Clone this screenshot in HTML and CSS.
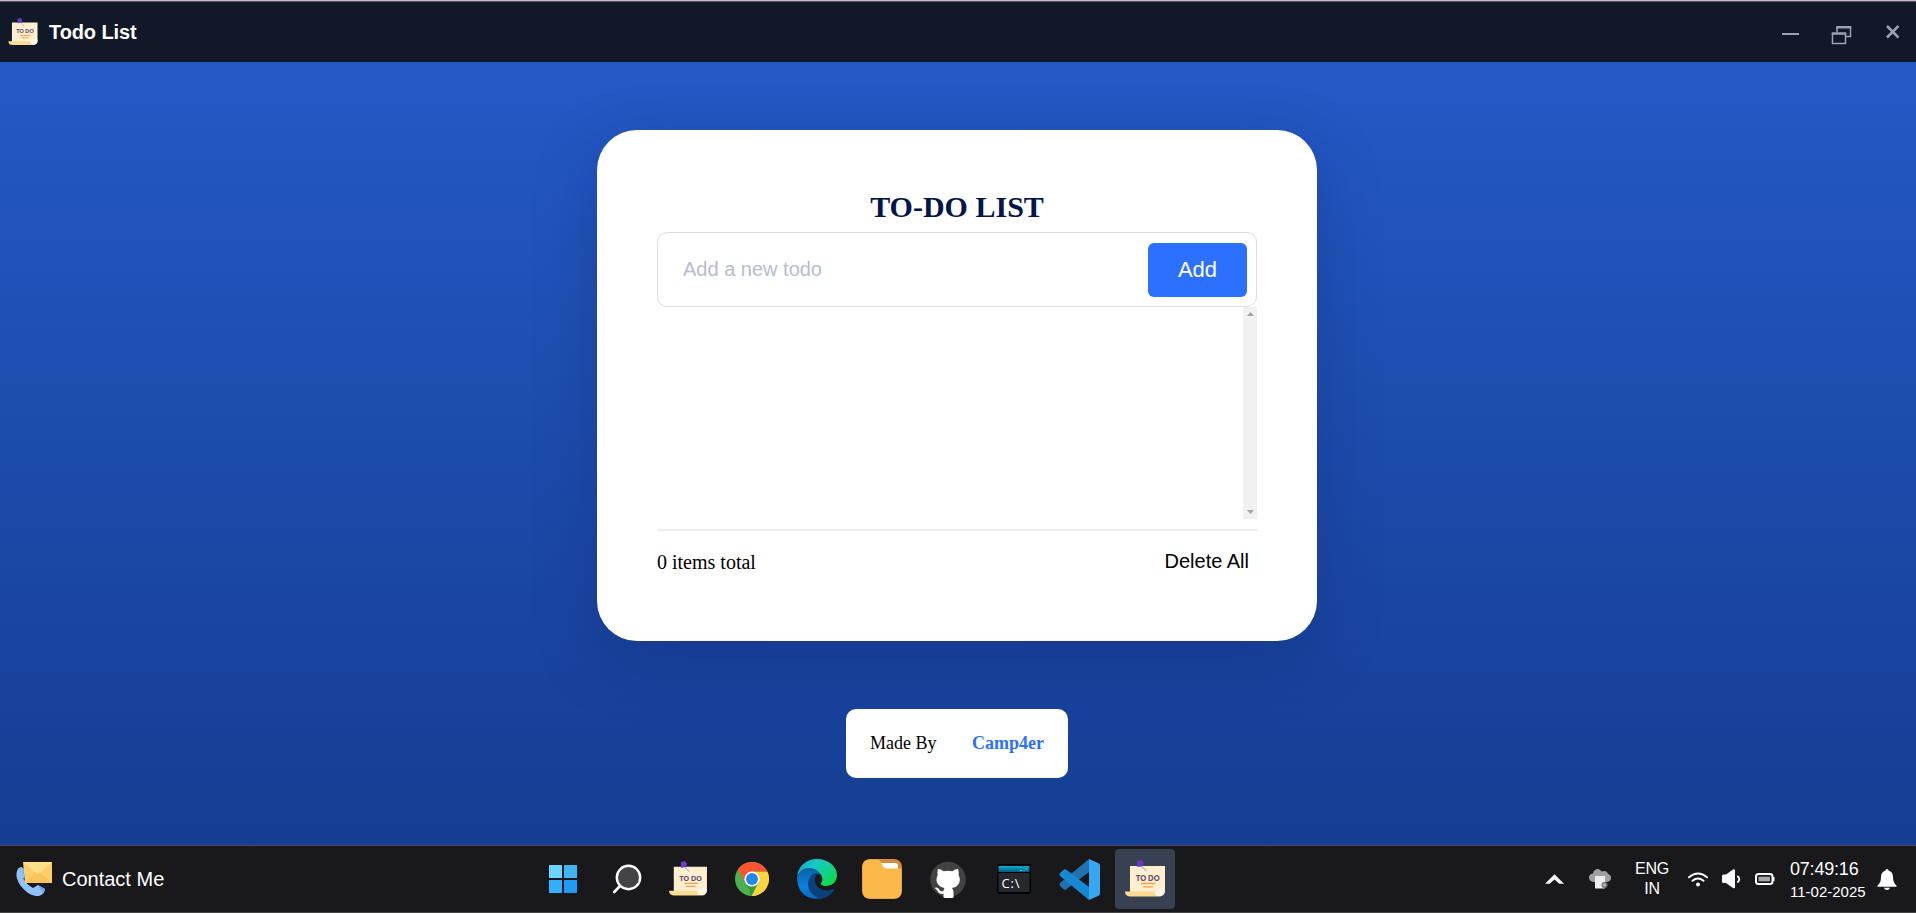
FILE: index.html
```html
<!DOCTYPE html>
<html lang="en">
<head>
<meta charset="utf-8">
<title>Todo List</title>
<link rel="stylesheet" href="styles.css">
</head>
<body>
<svg class="defs" width="0" height="0">
  <symbol id="note" viewBox="0 0 40 38">
    <path d="M5 6h35v24a6 6 0 0 1-5 6H5z" fill="#ffefcf"/>
    <path d="M0 31.500h30q0 5 5 5H6q-6 0-6-5z" fill="#fbdc94"/>
    <path d="M30 31.500q0 5 5 5 5-1 5-6-1-3-5-2.500-2 3-5 3.500z" fill="#fff6e3"/>
    <path d="M17 7l4.500 4" stroke="#c4b5d6" stroke-width="1.300"/>
    <path d="M12.500 1l4.500-1 2 3-1.500 3.500-5 .5z" fill="#6b3acb"/>
    <text x="22.800" y="20.800" text-anchor="middle" class="note-text" textLength="24">TO DO</text>
    <path d="M16 23.500h14.500M18 26.800h10" stroke="#fb9e47" stroke-width="1.300"/>
  </symbol>
</svg>
<div class="window">
  <header class="titlebar">
    <svg class="title-icon" viewBox="0 0 40 38"><use href="#note"/></svg>
    <h1 class="title">Todo List</h1>
    <svg class="controls" width="118" height="20" viewBox="0 0 118 20" fill="none" stroke="#9ca3af">
      <path d="M1 9h17" stroke-width="2"/>
      <path d="M56 7V2M69.500 2v9.500H65M51.500 8v10.500h13V8" stroke-width="1.500"/>
      <path d="M55.300 2.300h15M50.800 8.500h14.500" stroke-width="2.600"/>
      <path d="M106 1l11.500 11.500M117.500 1L106 12.500" stroke-width="2.600"/>
    </svg>
  </header>

  <main class="stage">
    <section class="card">
      <h2 class="heading">TO-DO LIST</h2>
      <div class="field">
        <span class="placeholder">Add a new todo</span>
        <button class="add">Add</button>
      </div>
      <div class="list">
        <div class="scrollbar">
          <svg width="7" height="4" viewBox="0 0 7 4"><path d="M0 4L3.500 0 7 4z" fill="#a3a3a3"/></svg>
          <svg width="7" height="4" viewBox="0 0 7 4"><path d="M0 0h7L3.500 4z" fill="#a3a3a3"/></svg>
        </div>
      </div>
      <div class="rule"></div>
      <div class="summary"><span>0 items total</span><button class="clear">Delete All</button></div>
    </section>
    <div class="credit"><span>Made By</span><a class="author">Camp4er</a></div>
  </main>

  <footer class="taskbar">
    <div class="contact">
      <svg width="36" height="34" viewBox="0 0 36 34">
        <path d="M1 9q1-4 5-4l4 7-3 4q3 6 10 10l5-3 7 4q0 5-6 7Q13 35 4 23-1 15 1 9z" fill="#8fc1fb"/>
        <path d="M7 5l3 7-3 4M22 23l7 4-2 4" fill="#69a7f2"/>
        <path d="M7 0h29v21H9z" fill="#ffcf67"/>
        <path d="M7 0h29L21.500 13z" fill="#ffe08a"/>
        <path d="M9 21l10-11 2.500 2L24 10l12 11z" fill="#fac45c"/>
        <path d="M7 12l3 1-3 4z" fill="#8fc1fb"/>
      </svg>
      <span>Contact Me</span>
    </div>

    <nav class="apps">
      <svg class="app win" viewBox="0 0 30 30"><path d="M1 1h13v13H1z" fill="#6bd5ff"/><path d="M16 1h13v13H16z" fill="#42b4f2"/><path d="M1 16h13v13H1z" fill="#2fb0fb"/><path d="M16 16h13v13H16z" fill="#1d9bf6"/></svg>
      <svg class="app search" viewBox="0 0 30 30"><path d="M8.500 21.500L2.200 28" stroke="#fff" stroke-width="2.600" stroke-linecap="round"/><circle cx="16.500" cy="13.500" r="11.700" fill="#444447" stroke="#fff" stroke-width="2.400"/></svg>
      <svg class="app note" viewBox="0 0 40 38"><use href="#note"/></svg>
      <svg class="app chrome" viewBox="0 0 34 34">
        <circle cx="17" cy="17" r="17" fill="#4caf50"/>
        <path d="M17 9.500h15.300A17 17 0 0 1 16.500 34l7-13z" fill="#ffd43d"/>
        <path d="M3 7.400A17 17 0 0 1 32.300 9.500H17L10 20z" fill="#fb5430"/>
        <path d="M10 22q5 5 12-.5L16.500 34q-2-1-1.500-6z" fill="#349c3b"/>
        <circle cx="17" cy="17" r="7.600" fill="#fff"/><circle cx="17" cy="17" r="6" fill="#2188ea"/>
      </svg>
      <svg class="app edge" viewBox="0 0 40 40">
        <defs>
          <linearGradient id="ea" x1="0" y1="0" x2="1" y2=".7"><stop offset="0" stop-color="#12a3df"/><stop offset=".4" stop-color="#17c9c4"/><stop offset="1" stop-color="#0fd94f"/></linearGradient>
          <linearGradient id="eb" x1=".4" y1="0" x2=".4" y2="1"><stop offset="0" stop-color="#0b5fa5"/><stop offset=".6" stop-color="#0c80dc"/><stop offset="1" stop-color="#0c62b8"/></linearGradient>
        </defs>
        <path d="M0 17C2 6 10 0 20 0c12 0 20 8 20 16 0 7-5 11-11 11-4 0-6-2-5-3 3-3 1-9-4-10C12 9 3 11 0 17z" fill="url(#ea)"/>
        <path d="M0 18c2-6 6-9 12-9 7 0 12 4 13 10-3-5-9-4-11 2-2 7 3 16 12 18-4 1-7 1-10 .5C6 38 0 30 0 18z" fill="url(#eb)"/>
        <path d="M19 14c-5 2-8 6-8 11 0 7 5 12 12 14.800C30 39 35 35 37 31c.3-1-.4-1.300-1-1-7 3-14 1-17-5-1-3-1.500-5 0-8 1-2 1-3 0-3z" fill="#0a417d"/>
        <path d="M20 15q4-1 5 4 0 3-1.500 5.500-.5 2 2 3.500l-1 2q-4-1-6-6-1.500-5 1.500-9z" fill="#19191b"/>
      </svg>
      <svg class="app folder" viewBox="0 0 40 40"><rect width="40" height="40" rx="8" fill="#d68a3c"/><path d="M19 4h14q3 0 3 3v5H22z" fill="#fff"/><path d="M8 .5h8q2 0 3 3l2 4q1 2 4 2h14.500V32q0 7.500-8 7.500H8Q.5 39.500.5 32V8Q.5.500 8 .5z" fill="#fbb84b"/></svg>
      <svg class="app github" viewBox="0 0 36 37"><circle cx="18" cy="18.500" r="17.800" fill="#424242"/><path d="M8 8q3 0 5.500 2.200 4.500-1 9 0Q25 8 28 8q1.200 3 .5 6 2 3 1 7-1.500 5-7.500 6 1.500 2 1.500 4v5.500q-5.500 2-10 0V33Q9 33.500 7.500 30q-1-2-3-3 3-1.500 5 2 1.500 2 4 1 0-2 1-3-6-1-7.700-6-1-4 1-7Q7 11 8 8z" fill="#fff"/></svg>
      <svg class="app cmd" viewBox="0 0 34 30"><defs><linearGradient id="cb" x1="0" y1="0" x2="0" y2="1"><stop offset="0" stop-color="#06b0d8"/><stop offset="1" stop-color="#07597c"/></linearGradient></defs><rect width="34" height="30" rx="2" fill="#020304"/><path d="M1.500 2h31v6h-31z" fill="url(#cb)"/><path d="M1.500 9h31v19h-31z" fill="#25292d"/><path d="M23 6.500h2m1.500 0h1m1-2l2 1.500" stroke="#6bbfd4"/><text x="4.500" y="24" class="cmd-text" textLength="18">C:\</text></svg>
      <svg class="app code" viewBox="0 0 41 41"><path d="M1 27l4 3.500q1 .6 2 0L30 13V0L1 24q-1 1.500 0 3z" fill="#2272af"/><path d="M1 14l4-3.500q1-.5 2 0L30 28v13L1 17q-1-1.500 0-3z" fill="#1689d4"/><path d="M30 0l10 4.500q1 .5 1 2v28q0 1.500-1 2L30 41z" fill="#37a6f3"/></svg>
      <div class="active"><svg class="active-note" viewBox="0 0 40 38"><use href="#note"/></svg></div>
    </nav>

    <div class="tray">
      <svg class="up" viewBox="0 0 20 10"><path d="M0 10L10 0l10 10h-5l-5-4.500L5 10z" fill="#f4f4f4"/></svg>
      <svg class="cloud" viewBox="0 0 22 20"><path d="M4 13Q0 12 0 8.500 0 5 4 4.500 5 0 9 0q2 0 3.500 2.500Q18 1 19 5q3 .5 3 4t-4 4z" fill="#a0a0a3"/><path d="M6 7h10v12.500H6z" fill="#ededed"/><circle cx="15.500" cy="16" r="2.200" fill="#bbb" stroke="#77777a" stroke-width="1.600"/></svg>
      <div class="lang"><span>ENG</span><span>IN</span></div>
      <svg class="wifi" viewBox="0 0 20 15"><g fill="none" stroke="#fff" stroke-width="1.900" stroke-linecap="round"><path d="M1 5.300q9-7.500 18 0M4.500 8.800q5.500-4.500 11 0"/></g><circle cx="10" cy="12.500" r="1.900" fill="#fff"/></svg>
      <svg class="sound" viewBox="0 0 19 20"><path d="M0 7q0-1.500 1.500-1.500H4L11 .5q1.500-.8 2 .5v17.500q-.5 1.300-2 .5l-7-5H1.500Q0 14 0 12.500z" fill="#fff"/><path d="M15.300 7q4 3 0 6.500" fill="none" stroke="#fff" stroke-width="1.900"/></svg>
      <svg class="battery" viewBox="0 0 20 12"><rect x="1" y="1" width="16.500" height="10" rx="2.500" fill="none" stroke="#fff" stroke-width="2"/><rect x="3.500" y="3.700" width="11.500" height="4.600" fill="#a5a5a7"/><path d="M18.700 4v4" stroke="#fff" stroke-width="1.600"/></svg>
      <div class="clock"><span class="time">07:49:16</span><span class="date">11-02-2025</span></div>
      <svg class="bell" viewBox="0 0 20 21"><path d="M10 0q1.500 0 1.500 1.600Q16 3 16 8q0 6 3.500 8.500v1.300H.5v-1.300Q4 14 4 8q0-5 4.500-6.400Q8.500 0 10 0zM7 18.700h6q-.6 2.300-3 2.300t-3-2.300z" fill="#fff"/></svg>
    </div>
  </footer>
</div>
</body>
</html>
```
FILE: styles.css
```css
* { box-sizing: border-box; }
body { margin: 0; }
svg { display: block; flex: none; }
button { border: 0; padding: 0; font-family: "Liberation Sans", Arial, sans-serif; }
.defs { display: none; }

.window {
  width: 1916px;
  height: 913px;
  display: flex;
  flex-direction: column;
  overflow: hidden;
  border-top: 1px solid #d3b9c3;
  font-family: "Liberation Sans", Arial, sans-serif;
}

.titlebar {
  height: 61px;
  flex: none;
  display: flex;
  align-items: center;
  padding-left: 8px;
  background: #111827;
  border-top: 1px solid #4b5563;
  color: #fff;
}
.title-icon { width: 30px; height: 28px; }
.title { margin: 0 0 0 11px; font-size: 20px; line-height: 28px; letter-spacing: -0.1px; }
.controls { margin: 6px 17px 0 auto; }

.stage {
  flex: 1;
  display: flex;
  flex-direction: column;
  align-items: center;
  padding: 68px 2px 0 0;
  background: linear-gradient(180deg, #2559c6 0%, #153d92 100%);
  font-family: "Liberation Serif", "Times New Roman", serif;
}
.card {
  width: 720px;
  height: 511px;
  padding: 60px;
  border-radius: 40px;
  background: #fff;
  box-shadow: 0 20px 60px rgba(15, 40, 110, .35);
}
.heading {
  margin: 0;
  height: 42px;
  font-size: 30px;
  line-height: 33px;
  text-align: center;
  color: #00154a;
}
.field {
  height: 75px;
  display: flex;
  align-items: center;
  justify-content: space-between;
  padding: 0 9px 0 25px;
  border: 1px solid #dcdcdc;
  border-radius: 10px;
  font-family: "Liberation Sans", Arial, sans-serif;
}
.placeholder { font-size: 20px; color: #b5bdd0; }
.add { width: 99px; height: 54px; border-radius: 6px; background: #2c70ff; color: #fff; font-size: 22px; }
.list { height: 212px; display: flex; justify-content: flex-end; }
.scrollbar {
  width: 14px;
  display: flex;
  flex-direction: column;
  align-items: center;
  justify-content: space-between;
  padding: 5px 0;
  background: #f1f1f1;
}
.rule { height: 2px; margin-top: 10px; background: #eee; }
.summary { display: flex; align-items: center; justify-content: space-between; height: 62px; font-size: 20px; }
.clear { padding: 0 8px 2px 0; background: none; font-size: 20px; color: #000; }
.credit {
  width: 222px;
  height: 69px;
  margin-top: 68px;
  padding: 0 24px;
  display: flex;
  align-items: center;
  justify-content: space-between;
  border-radius: 10px;
  background: #fff;
  font-size: 18px;
}
.author { color: #2c70ff; font-weight: bold; }

.taskbar {
  height: 68px;
  flex: none;
  display: grid;
  grid-template-columns: 548px 627px 1fr;
  background: #19191b;
  border-top: 1px solid #4a5058;
  border-bottom: 1px solid #454545;
  color: #fff;
}
.contact { display: flex; align-items: center; gap: 10px; padding-left: 16px; font-size: 20px; }
.apps { display: flex; align-items: center; }
.win { width: 30px; height: 30px; }
.search { width: 30px; height: 30px; margin-left: 34px; }
.note { width: 38px; height: 36px; margin-left: 27px; }
.chrome { width: 34px; height: 34px; margin-left: 28px; }
.edge { width: 40px; height: 40px; margin-left: 28px; }
.folder { width: 40px; height: 40px; margin-left: 25px; }
.github { width: 36px; height: 37px; margin-left: 28px; }
.cmd { width: 34px; height: 30px; margin-left: 31px; }
.code { width: 41px; height: 41px; margin-left: 28px; }
.active {
  width: 60px;
  height: 60px;
  margin-left: 15px;
  display: flex;
  align-items: center;
  justify-content: center;
  border-radius: 4px;
  background: #374151;
}
.active-note { width: 40px; height: 38px; }
.note-text { font: bold 8px "Open Sans", sans-serif; fill: #68506f; }
.cmd-text { font: 13px "Open Sans", sans-serif; fill: #fff; }

.tray { display: flex; align-items: center; padding-left: 370px; }
.up { width: 19px; height: 10px; }
.cloud { width: 22px; height: 20px; margin-left: 25px; }
.lang { width: 36px; margin-left: 23px; display: flex; flex-direction: column; align-items: center; font-size: 16px; line-height: 20px; letter-spacing: -0.3px; }
.wifi { width: 20px; height: 15px; margin-left: 18px; }
.sound { width: 19px; height: 20px; margin-left: 14px; }
.battery { width: 20px; height: 12px; margin-left: 14px; }
.clock { width: 78px; margin-left: 15px; display: flex; flex-direction: column; }
.time { font-size: 18px; line-height: 24px; letter-spacing: -0.2px; }
.date { font-size: 15px; line-height: 21px; }
.bell { width: 20px; height: 21px; margin-left: 9px; }
```
